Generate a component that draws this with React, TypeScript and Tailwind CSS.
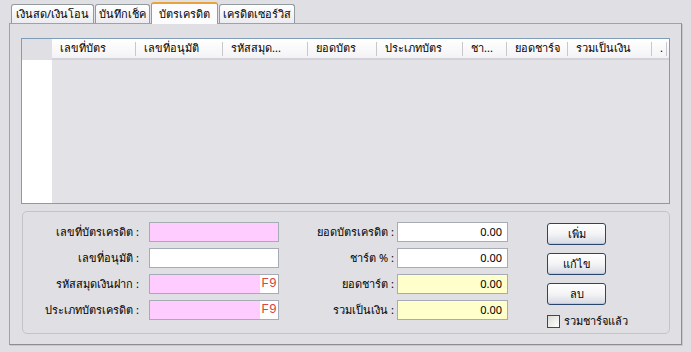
import React from "react";

const font = { fontFamily: 'Tahoma, "Noto Sans", "DejaVu Sans", sans-serif' };

const cols: { label: string; w: number }[] = [
  { label: "เลขที่บัตร", w: 84 },
  { label: "เลขที่อนุมัติ", w: 87 },
  { label: "รหัสสมุด...", w: 85 },
  { label: "ยอดบัตร", w: 69 },
  { label: "ประเภทบัตร", w: 86 },
  { label: "ชา...", w: 44 },
  { label: "ยอดชาร์จ", w: 61 },
  { label: "รวมเป็นเงิน", w: 84 },
  { label: ".", w: 15 },
];

function Tab({ label, active, w }: { label: string; active?: boolean; w: number }) {
  if (active) {
    return (
      <div
        className="relative z-10 -mb-px flex h-[22px] items-center justify-center rounded-t-[3px] border-x border-t-2 border-[#919b9c] border-t-[#e8a33a] bg-[#fcfcfe] text-[11px] text-black"
        style={{ width: w }}
      >
        {label}
      </div>
    );
  }
  return (
    <div
      className="flex h-[19px] items-center justify-center rounded-t-[3px] border-x border-t border-[#919b9c] bg-gradient-to-b from-white to-[#ecebf0] text-[11px] text-black"
      style={{ width: w }}
    >
      {label}
    </div>
  );
}

function Field({ bg, value, f9, w }: { bg: string; value?: string; f9?: boolean; w: number }) {
  return (
    <div className={`flex h-[20px] border border-[#a5acb5] ${bg}`} style={{ width: w }}>
      <div className="flex flex-1 items-center justify-end pr-[5px] text-[11px] text-black">{value}</div>
      {f9 && (
        <div
          className="flex w-[18px] items-center justify-center bg-white text-[13px] text-[#d9453f]"
          style={{ fontFamily: '"Liberation Mono", monospace' }}
        >
          F9
        </div>
      )}
    </div>
  );
}

function Btn({ label }: { label: string }) {
  return (
    <div className="flex h-[22px] w-[59px] items-center justify-center rounded-[3px] border border-[#28466e] bg-gradient-to-b from-white via-[#f4f4f6] to-[#d6d9e4] text-[11px] text-black shadow-[inset_0_-1px_0_#c3c9da]">
      {label}
    </div>
  );
}

export default function App() {
  return (
    <div className="h-[352px] w-[691px] overflow-hidden bg-[#e0dfe3] px-[9px] pt-[1px]" style={font}>
      {/* tabs */}
      <div className="flex h-[22px] items-end gap-[1px] pl-[2px]">
        <Tab label="เงินสด/เงินโอน" w={83} />
        <Tab label="บันทึกเช็ค" w={55} />
        <Tab label="บัตรเครดิต" active w={67} />
        <Tab label="เครดิตเซอร์วิส" w={76} />
      </div>
      {/* pane */}
      <div className="h-[322px] w-[673px] border border-[#a2a2a6] border-r-[#8e8e92] border-b-[#8e8e92] bg-[#e0dfe3] px-[11px] pt-[14px] shadow-[1px_1px_0_#c9c8cc]">
        {/* table */}
        <div className="flex h-[166px] w-[649px] border border-[#7f9db9] bg-[#e3e2e7]">
          <div className="flex w-[30px] flex-col">
            <div className="h-[21px] bg-[#e0dfe3]" />
            <div className="flex-1 bg-white" />
          </div>
          <div className="flex flex-1 flex-col">
            <div className="flex h-[21px] border-b-2 border-[#d2d2d8] bg-gradient-to-b from-white to-[#f3f3f6]">
              {cols.map((c, i) => (
                <div
                  key={i}
                  className="relative flex items-center overflow-hidden whitespace-nowrap pl-[8px] text-[11px] text-black"
                  style={{ width: c.w }}
                >
                  {c.label}
                  <span className="absolute right-0 top-[3px] h-[14px] w-px bg-[#c7c7cc]" />
                </div>
              ))}
            </div>
            <div className="flex-1" />
          </div>
        </div>
        {/* group box */}
        <div className="mt-[7px] ml-[1px] flex h-[123px] w-[648px] rounded-[5px] border border-[#c3c3c8] pt-[10px] text-[11px] text-black">
          <div className="flex flex-col gap-[6px]">
            {[
              { l: "เลขที่บัตรเครดิต :", bg: "bg-[#ffccff]" },
              { l: "เลขที่อนุมัติ :", bg: "bg-white" },
              { l: "รหัสสมุดเงินฝาก :", bg: "bg-[#ffccff]", f9: true },
              { l: "ประเภทบัตรเครดิต :", bg: "bg-[#ffccff]", f9: true },
            ].map((r, i) => (
              <div key={i} className="flex h-[20px] items-center">
                <div className="w-[116px] text-right">{r.l}</div>
                <div className="ml-[10px]">
                  <Field bg={r.bg} f9={r.f9} w={130} />
                </div>
              </div>
            ))}
          </div>
          <div className="flex flex-col gap-[6px]">
            {[
              { l: "ยอดบัตรเครดิต :", bg: "bg-white" },
              { l: "ชาร์ต % :", bg: "bg-white" },
              { l: "ยอดชาร์ต :", bg: "bg-[#ffffcc]" },
              { l: "รวมเป็นเงิน :", bg: "bg-[#ffffcc]" },
            ].map((r, i) => (
              <div key={i} className="flex h-[20px] items-center">
                <div className="w-[115px] text-right">{r.l}</div>
                <div className="ml-[3px]">
                  <Field bg={r.bg} value="0.00" w={111} />
                </div>
              </div>
            ))}
          </div>
          <div className="ml-[39px] flex flex-col">
            <div className="mt-[1px] flex flex-col gap-[8px]">
              <Btn label="เพิ่ม" />
              <Btn label="แก้ไข" />
              <Btn label="ลบ" />
            </div>
            <div className="mt-[8px] flex items-center">
              <div className="h-[13px] w-[13px] border border-[#1c5180] bg-gradient-to-br from-[#dcdcd7] to-white" />
              <span className="ml-[4px]">รวมชาร์จแล้ว</span>
            </div>
          </div>
        </div>
      </div>
    </div>
  );
}
